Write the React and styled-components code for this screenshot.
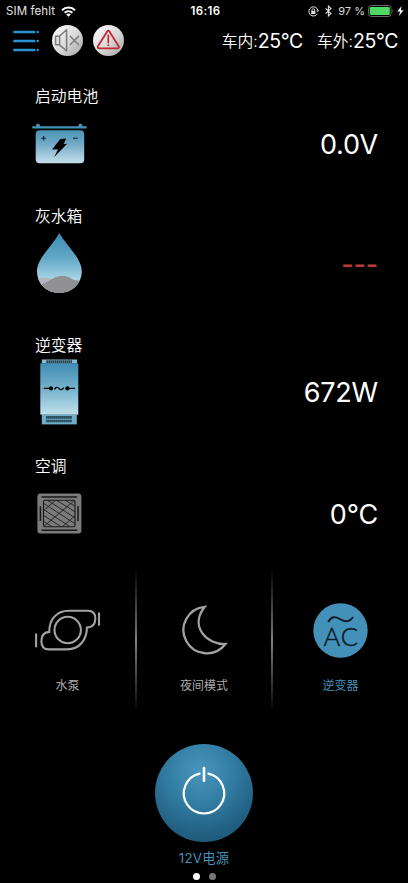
import styled, { createGlobalStyle } from "styled-components";

const colors = {
  blue: "#4391b8",
  line: "#2a93cf",
  red: "#b53c37",
  grey: "#a3a3a3",
};

function StatusBar() {
  return (
    <StyledStatusBar>
      <Carrier>
        <span>SIM fehlt</span>
        <svg width="15" height="11" viewBox="0 0 15 11">
          <g fill="none" stroke="#fff" strokeWidth="2">
            <path d="M1 4.2 C4.6 0.7 10.4 0.7 14 4.2" />
            <path d="M3.6 6.7 C5.8 4.6 9.2 4.6 11.4 6.7" />
          </g>
          <path d="M7.5 10.8 L5.2 8.5 C6.5 7.3 8.5 7.3 9.8 8.5 Z" fill="#fff" />
        </svg>
      </Carrier>
      <Time>16:16</Time>
      <Indicators>
        <svg width="11" height="11" viewBox="0 0 11 11">
          <path d="M9.9 4.2 A4.6 4.6 0 1 0 9.4 7.8" fill="none" stroke="#ddd" />
          <path d="M8.3 4.3 H11 L9.8 6.3 Z" fill="#ddd" />
          <rect x="3.2" y="4.9" width="4.2" height="3.1" fill="#ddd" />
          <path d="M4 5 V4 A1.3 1.3 0 0 1 6.6 4 V5" fill="none" stroke="#ddd" strokeWidth="0.9" />
        </svg>
        <Bluetooth width="7" height="12" viewBox="0 0 7 12">
          <path d="M0.6 3.3 L6 8.6 L3.4 11 V1 L6 3.4 L0.6 8.7" fill="none" stroke="#ddd" strokeWidth="1.1" />
        </Bluetooth>
        <Percent>97 %</Percent>
        <svg width="26" height="12" viewBox="0 0 26 12">
          <rect x="0.5" y="0.5" width="22.6" height="11" rx="2.8" fill="none" stroke="#666" />
          <rect x="1.8" y="1.9" width="20" height="8.2" rx="1.4" fill="#4cd964" />
          <path d="M24.3 4 Q26 6 24.3 8 Z" fill="#666" />
        </svg>
        <svg width="7" height="10" viewBox="0 0 7 10">
          <path d="M4.6 0 L0.3 5.6 H3 L2 10 L6.6 4.2 H3.8 Z" fill="#fff" />
        </svg>
      </Indicators>
    </StyledStatusBar>
  );
}

function Header() {
  return (
    <StyledHeader>
      <Tools>
        <svg width="26" height="22" viewBox="0 0 26 22">
          <g stroke={colors.line} strokeWidth="2.4" strokeLinecap="round">
            <path d="M1.3 2 H21.3 M1.3 11 H21.3 M1.3 20 H21.3" />
            <path d="M24.7 2 h0.1 M24.7 11 h0.1 M24.7 20 h0.1" />
          </g>
        </svg>
        <RoundButton>
          <svg width="31" height="31" viewBox="0 0 31 31">
            <g fill="none" stroke="#7b7b7b" strokeWidth="1.5" strokeLinejoin="round" strokeLinecap="round">
              <path d="M3.6 11.2 H7.4 L14.6 4.8 V25.8 L7.4 19.8 H3.6 Z M7.6 11.4 V19.6" />
              <path d="M18.4 11.4 L26.4 19.6 M26.4 11.4 L18.4 19.6" />
            </g>
          </svg>
        </RoundButton>
        <RoundButton>
          <svg width="31" height="31" viewBox="0 0 31 31">
            <g fill="none" stroke="#c5262f" strokeLinejoin="round" strokeLinecap="round">
              <path d="M14.2 6.5 Q15.3 4.8 16.4 6.5 L25.7 21.2 Q26.5 23.3 24.2 23.4 H6.4 Q4.1 23.3 4.9 21.2 Z" strokeWidth="1.8" />
              <path d="M15.3 10.4 V17.6 M15.3 20.2 V20.3" strokeWidth="1.7" />
            </g>
          </svg>
        </RoundButton>
      </Tools>
      <Temperatures>
        <Temperature>
          车内:<b>25°C</b>
        </Temperature>
        <Temperature>
          车外:<b>25°C</b>
        </Temperature>
      </Temperatures>
    </StyledHeader>
  );
}

function BatteryIcon() {
  return (
    <svg width="56" height="41" viewBox="0 0 56 41">
      <defs>
        <linearGradient id="battery" x1="0" y1="0" x2="0" y2="1">
          <stop offset="0" stopColor="#4a92b5" />
          <stop offset="0.45" stopColor="#75adc8" />
          <stop offset="1" stopColor="#c6e0eb" />
        </linearGradient>
      </defs>
      <path
        d="M1 3.2 H3.8 Q4.2 0.6 6 0.6 Q7.8 0.6 8.2 3.2 H46.2 Q46.6 0.6 48.4 0.6 Q50.2 0.6 50.6 3.2 H54 Q54.8 3.2 54.8 4.5 Q54.8 5.6 54 5.6 H1 Q0.1 5.6 0.1 4.5 Q0.1 3.2 1 3.2 Z"
        fill={colors.blue}
      />
      <rect x="3.7" y="7.2" width="48.5" height="33" rx="4" fill="url(#battery)" />
      <path d="M9.3 15.2 H14 M11.6 12.9 V17.5 M41 15.3 H45.8" stroke="#123" strokeWidth="1.1" />
      <path d="M28.3 16 L34.2 15.6 L31.6 21 L35.2 20.8 L22.2 34 L26 26.2 L20 26.4 Z" fill="#000" />
    </svg>
  );
}

function WaterIcon() {
  return (
    <svg width="45" height="61" viewBox="0 0 45 61">
      <defs>
        <linearGradient id="water" x1="0" y1="0" x2="0" y2="1">
          <stop offset="0" stopColor="#3c8cb5" />
          <stop offset="0.4" stopColor="#61a6c6" />
          <stop offset="0.8" stopColor="#b0dae9" />
        </linearGradient>
        <clipPath id="drop">
          <path d="M22.3 0 C28 11 44.8 25 44.8 38 C44.8 51 34.7 60 22.4 60 C10 60 0 51 0 38 C0 25 17 11 22.3 0 Z" />
        </clipPath>
      </defs>
      <g clipPath="url(#drop)">
        <rect width="45" height="61" fill="url(#water)" />
        <path d="M0 46 Q7 43 16 46 V61 H0 Z" fill="#b5b5bf" />
        <path d="M0 51.5 C7 51.5 10 49 15 46 C22 41.5 29 42 34 45.5 Q39 49 45 46.5 V61 H0 Z" fill="#919193" />
      </g>
    </svg>
  );
}

function InverterIcon() {
  return (
    <svg width="39" height="66" viewBox="0 0 39 66">
      <defs>
        <linearGradient id="inverter" x1="0" y1="0" x2="0" y2="1">
          <stop offset="0" stopColor="#408db4" />
          <stop offset="0.5" stopColor="#76b2cc" />
          <stop offset="1" stopColor="#c0e1ed" />
        </linearGradient>
      </defs>
      <rect x="1.8" y="0.5" width="35.2" height="4" fill="#8abbd0" />
      <rect x="0.3" y="4.3" width="38" height="51.5" rx="0.8" fill="url(#inverter)" />
      <rect x="1.8" y="55.8" width="35" height="9.6" fill="#6fadc9" />
      <path d="M6.5 2.6 H32.2" stroke="#10242e" strokeWidth="2.6" strokeDasharray="1.3 0.7" />
      <path d="M6.3 58.4 H32.2 M6.3 62 H32.2" stroke="#10242e" strokeWidth="2.7" strokeDasharray="1.3 0.7" />
      <g fill="none" stroke="#000" strokeWidth="1.3">
        <path d="M3.8 29.4 H11 M27.4 29.4 H34.8" />
        <path d="M14.5 30.4 C16 27.3 18 28.2 19.2 29.6 C20.6 31.2 22.4 31 23.7 28.6" />
      </g>
      <circle cx="11" cy="29.4" r="2.1" />
      <circle cx="27.4" cy="29.4" r="2.1" />
    </svg>
  );
}

function ClimateIcon() {
  return (
    <svg width="45" height="41" viewBox="0 0 45 41">
      <defs>
        <clipPath id="grille">
          <rect x="6.5" y="7.2" width="31.5" height="26.6" rx="1.5" />
        </clipPath>
      </defs>
      <rect x="0.4" y="0.4" width="44" height="40.2" rx="3" fill="#7b7b7b" />
      <path d="M4.5 4 H40.2 M4.5 37.3 H40.2 M3.4 13.3 V28 M41.1 13.3 V28" stroke="#181818" strokeWidth="1.5" />
      <g clipPath="url(#grille)" fill="none" stroke="#202020" strokeWidth="0.9">
        <path d="M6 28 L17 35 M6 22 L26 35 M6 16 L35 35 M6 10 L40 32 M10 7 L40 26 M19 7 L40 20 M28 7 L40 14.5" />
        <path d="M6 18 L19 7 M6 34 L38 7 M25 34 L39 22" />
      </g>
      <rect x="6.5" y="7.2" width="31.5" height="26.6" rx="1.5" fill="none" stroke="#181818" strokeWidth="1.1" />
    </svg>
  );
}

function PumpIcon() {
  return (
    <svg width="68" height="44" viewBox="0 0 68 44">
      <g fill="none" stroke={colors.grey} strokeWidth="2.1">
        <circle cx="33.7" cy="22" r="13.2" />
        <path d="M15.3 23.9 C15 12 22 2.7 35 2.7 H54 C59 2.7 61.3 6 61.3 10.5 C61.3 16 58.5 19.3 52.9 19.6 C53 31 46 41.4 33 41.4 H15 C10 41.4 7.4 38.5 7.4 33.5 C7.4 27.5 10 24.2 15.3 23.9 Z" />
        <path d="M65 4.6 V17.8 M2.1 25.4 V39.3" />
      </g>
    </svg>
  );
}

function MoonIcon() {
  return (
    <svg width="50" height="54" viewBox="-1 0 50 54">
      <path
        d="M24.8 3.8 A23.3 23.3 0 1 0 45.4 41 C28 42 8.5 24 24.8 3.8 Z"
        fill="none"
        stroke={colors.grey}
        strokeWidth="2.3"
      />
    </svg>
  );
}

function AcIcon() {
  return (
    <svg width="55" height="55" viewBox="0 0 55 55">
      <circle cx="27.5" cy="27.5" r="27.2" fill={colors.blue} />
      <path d="M15.2 18.9 C18.5 13.2 22 13 27.3 16.2 C32.5 19.4 36.5 19.3 40 14" fill="none" stroke="#0c1c25" strokeWidth="1.9" />
      <text
        x="10.6"
        y="42.8"
        textLength="34.5"
        fontFamily="Lato, sans-serif"
        fontSize="25.5"
        fontWeight="300"
        fill="#0c1c25"
        stroke="#0c1c25"
        strokeWidth="0.5"
      >
        AC
      </text>
    </svg>
  );
}

const readings = [
  { title: "启动电池", value: "0.0V", icon: <BatteryIcon />, height: 120, gap: 15, shift: -3 },
  { title: "灰水箱", value: "---", icon: <WaterIcon />, height: 129, gap: 5, shift: 2, alert: true },
  { title: "逆变器", value: "672W", icon: <InverterIcon />, height: 121, gap: 2, shift: 5 },
  { title: "空调", value: "0°C", icon: <ClimateIcon />, height: 116, gap: 15, shift: 2 },
];

const switches = [
  { label: "水泵", icon: <PumpIcon /> },
  { label: "夜间模式", icon: <MoonIcon /> },
  { label: "逆变器", icon: <AcIcon />, active: true },
];

function App() {
  return (
    <>
      <GlobalStyle />
      <Screen>
        <StatusBar />
        <Header />
        <Readings>
          {readings.map((item) => (
            <Reading key={item.title} $height={item.height}>
              <Title>{item.title}</Title>
              <ReadingBody $gap={item.gap} $shift={item.shift}>
                {item.icon}
                <Value $alert={item.alert}>{item.value}</Value>
              </ReadingBody>
            </Reading>
          ))}
        </Readings>
        <Switches>
          {switches.map((item) => (
            <Switch key={item.label} $active={item.active}>
              <SwitchIcon>{item.icon}</SwitchIcon>
              <span>{item.label}</span>
            </Switch>
          ))}
        </Switches>
        <PowerSection>
          <PowerButton>
            <svg width="44" height="50" viewBox="0 0 44 50" overflow="visible">
              <g fill="none" stroke="#fff" strokeWidth="2.2" strokeLinecap="round">
                <path d="M17.6 5.6 A20.2 20.2 0 1 0 26.4 5.6" />
                <path d="M22 0.1 V12.7" strokeWidth="2.6" />
              </g>
            </svg>
          </PowerButton>
          <PowerLabel>12V电源</PowerLabel>
          <Pager>
            <Dot $active />
            <Dot />
          </Pager>
        </PowerSection>
      </Screen>
    </>
  );
}
export default App;

const GlobalStyle = createGlobalStyle`
  body {
    margin: 0;
    background: #000;
  }

  svg {
    display: block;
    flex: none;
  }
`;

const Screen = styled.div`
  display: flex;
  flex-direction: column;
  width: 408px;
  height: 883px;
  overflow: hidden;
  background: #000;
  color: #fff;
  font-family: Inter, "Noto Sans CJK SC", sans-serif;
`;

const StyledStatusBar = styled.div`
  display: grid;
  grid-template-columns: 1fr auto 1fr;
  align-items: center;
  box-sizing: border-box;
  height: 21px;
  padding: 1px 4px 0 6px;
  font-size: 11.5px;
  line-height: 20px;
  white-space: nowrap;
`;

const Carrier = styled.div`
  display: flex;
  align-items: center;
  gap: 6px;
  color: #e4e4e4;
  letter-spacing: 0.1px;
`;

const Time = styled.div`
  padding-left: 1px;
  font-weight: 600;
  letter-spacing: 0.4px;
`;

const Indicators = styled.div`
  display: flex;
  align-items: center;
  justify-content: flex-end;
  gap: 3px;
`;

const Bluetooth = styled.svg`
  margin-left: 3px;
`;

const Percent = styled.span`
  margin-left: 3px;
  font-size: 11px;
  color: #ddd;
`;

const StyledHeader = styled.header`
  display: flex;
  align-items: center;
  justify-content: space-between;
  height: 39px;
  padding: 0 10px 0 13px;
`;

const Tools = styled.div`
  display: flex;
  align-items: center;
  gap: 10px;

  > svg {
    margin-right: 3px;
  }
`;

const RoundButton = styled.div`
  width: 31px;
  height: 31px;
  border-radius: 50%;
  background: linear-gradient(135deg, #f4f4f4 15%, #d8d8d8 55%, #a6a6a6 95%);
`;

const Temperatures = styled.div`
  display: flex;
  gap: 14px;
`;

const Temperature = styled.div`
  display: flex;
  align-items: center;
  height: 24px;
  font-size: 15.8px;
  font-weight: 350;
  white-space: nowrap;

  b {
    font-size: 19.5px;
    font-weight: 400;
    letter-spacing: -0.4px;
  }
`;

const Readings = styled.section`
  display: flex;
  flex-direction: column;
  padding: 24px 30px 0 35px;
`;

const Reading = styled.div`
  height: ${(props) => props.$height}px;
`;

const Title = styled.div`
  height: 24px;
  font-size: 15.8px;
  font-weight: 350;
  line-height: 26px;
`;

const ReadingBody = styled.div`
  display: flex;
  align-items: center;
  justify-content: space-between;
  margin-top: ${(props) => props.$gap}px;
  margin-left: ${(props) => props.$shift}px;
`;

const Value = styled.span`
  padding-top: 2px;
  font-size: 27px;
  font-weight: ${(props) => (props.$alert ? 500 : 400)};
  line-height: 32px;
  letter-spacing: -0.2px;
  color: ${(props) => (props.$alert ? colors.red : "#fff")};
`;

const Switches = styled.section`
  display: grid;
  grid-template-columns: 135px 136px 137px;
  height: 142px;
`;

const Switch = styled.div`
  display: flex;
  flex-direction: column;
  align-items: center;
  box-sizing: border-box;
  font-size: 12px;
  line-height: 18px;
  color: ${(props) => (props.$active ? colors.blue : "#a8a8a8")};

  & + & {
    border-left: 2px solid;
    border-image: linear-gradient(#000, #808080 50%, #000) 1;
  }
`;

const SwitchIcon = styled.div`
  display: flex;
  align-items: center;
  justify-content: center;
  height: 107px;
  padding-top: 13px;
  box-sizing: border-box;
`;

const PowerSection = styled.section`
  display: flex;
  flex-direction: column;
  align-items: center;
  padding-top: 32px;
`;

const PowerButton = styled.div`
  display: flex;
  align-items: center;
  justify-content: center;
  width: 98px;
  height: 98px;
  border-radius: 50%;
  background: radial-gradient(circle at 46% 28%, #4896bd 0%, #327ca2 38%, #215f80 72%, #1b5070 100%);
`;

const PowerLabel = styled.div`
  margin-top: 6px;
  height: 20px;
  font-size: 13.3px;
  line-height: 20px;
  letter-spacing: 0.2px;
  color: ${colors.blue};
`;

const Pager = styled.div`
  display: flex;
  gap: 9px;
  margin-top: 5px;
`;

const Dot = styled.span`
  width: 7px;
  height: 7px;
  border-radius: 50%;
  background: ${(props) => (props.$active ? "#fff" : "#777")};
`;
